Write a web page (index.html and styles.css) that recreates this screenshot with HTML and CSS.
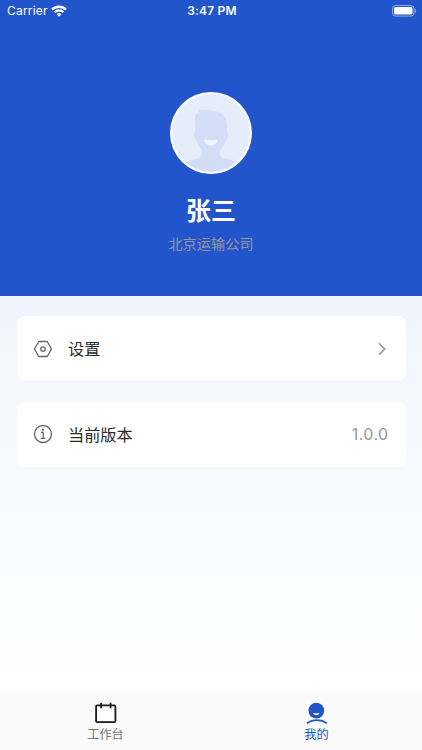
FILE: index.html
```html
<!DOCTYPE html>
<html lang="zh-CN">
<head>
  <meta charset="utf-8">
  <title>我的</title>
  <link rel="stylesheet" href="styles.css">
</head>
<body>

<header class="header">
  <div class="status">
    <div class="carrier">
      <span>Carrier</span>
      <svg width="16" height="12" viewBox="0 0 16 12" fill="none" stroke="#fff" stroke-width="2.3">
        <path d="M1 4.600a10 10 0 0 1 14 0"/>
        <path d="M3.600 7.300a6.300 6.300 0 0 1 8.800 0"/>
        <path d="M8 11.700L5.600 9.200a3.500 3.500 0 0 1 4.800 0z" fill="#fff" stroke="none"/>
      </svg>
    </div>
    <div class="time">3:47 PM</div>
    <svg class="battery" width="25" height="12" viewBox="0 0 25 12">
      <rect x=".5" y=".5" width="21.5" height="10.6" rx="3" fill="none" stroke="#fff" stroke-opacity=".5"/>
      <rect x="2" y="2" width="18.5" height="7.6" rx="1.6" fill="#fff"/>
      <path d="M23.2 4v4c1.4-.6 1.4-3.4 0-4z" fill="#fff" fill-opacity=".6"/>
    </svg>
  </div>
  <svg class="avatar" width="82" height="82" viewBox="0 0 82 82">
    <defs><clipPath id="face"><circle cx="41" cy="41" r="39"/></clipPath></defs>
    <circle cx="41" cy="41" r="41" fill="#fff"/>
    <circle cx="41" cy="41" r="39" fill="#e6edfa"/>
    <g clip-path="url(#face)">
      <path fill="#d3def6" d="M30 18C44 17 57 20 57 33v7c2 1 1 8-2 10-1 4-4 7-5 9-1 6 2 7 7 8 6 1 10 3 14 6v9H11v-9c4-3 9-5 14-6 5-1 8-3 7-9-2-3-4-6-5-9-3-2-4-8-2-10v-9c0-5 0-8 3-9 1-1 1-2 2-4z"/>
      <path fill="#eff4fd" d="M34.500 47.500c4 1 9 1 13 0 0 8-13 8-13 0z"/>
    </g>
  </svg>
  <div class="name">张三</div>
  <div class="company">北京运输公司</div>
</header>

<main class="list">
  <div class="card">
    <svg width="20" height="20" viewBox="0 0 20 20" fill="none" stroke="#666" stroke-width="1.3">
      <path d="M5.700 2.500h8.600L18.500 10l-4.200 7.500H5.700L1.500 10z" stroke-linejoin="round"/>
      <circle cx="10" cy="10" r="2.200"/>
    </svg>
    <span class="label">设置</span>
    <svg class="arrow" width="10" height="14" viewBox="0 0 10 14" fill="none" stroke="#969696" stroke-width="1.6">
      <path d="M2 1.300L7.700 7 2 12.700"/>
    </svg>
  </div>
  <div class="card">
    <svg width="20" height="20" viewBox="0 0 20 20" fill="none" stroke="#666" stroke-width="1.3">
      <circle cx="10" cy="10" r="8.500"/>
      <path d="M8 8.300h2.200v6M7.700 14.300h4.800"/>
      <circle cx="10" cy="5.700" r="1.100" fill="#666" stroke="none"/>
    </svg>
    <span class="label">当前版本</span>
    <span class="version">1.0.0</span>
  </div>
</main>

<nav class="tabs">
  <div class="tab">
    <svg width="24" height="24" viewBox="0 0 24 24" fill="none" stroke="#1a1a1a" stroke-width="1.8">
      <rect x="2.100" y="4.400" width="19.300" height="16.800" rx="1.200" fill="#fff"/>
      <path d="M7.100 1.700v5.500M16.600 1.700v5.500"/>
    </svg>
    <span>工作台</span>
  </div>
  <div class="tab active">
    <svg width="24" height="24" viewBox="0 0 24 24">
      <rect x="1" y="1" width="22" height="22" fill="#fff"/>
      <circle cx="11.300" cy="9.600" r="7.900" fill="#2255cc"/>
      <path d="M8.300 12q3 .8 6 0c0 2.800-6 2.800-6 0z" fill="#fff"/>
      <path d="M2 22.300C7.500 18 16 18 21.800 22.300" fill="none" stroke="#2255cc" stroke-width="1.800"/>
    </svg>
    <span>我的</span>
  </div>
</nav>

</body>
</html>
```
FILE: styles.css
```css
* {
  box-sizing: border-box;
}
body {
  margin: 0;
  height: 750px;
  display: flex;
  flex-direction: column;
  font-family: Inter, "Noto Sans CJK SC", sans-serif;
  background: linear-gradient(#f1f4fd 295px, #fff 690px);
}
svg {
  display: block;
  flex: none;
}
.header {
  height: 295.5px;
  background: #2255cc;
  color: #fff;
  display: flex;
  flex-direction: column;
  align-items: center;
}
.status {
  width: 100%;
  height: 21px;
  padding: 0 5px 0 7px;
  display: grid;
  grid-template-columns: 1fr auto 1fr;
  align-items: center;
  font-size: 12px;
  letter-spacing: 0.2px;
}
.carrier {
  display: flex;
  align-items: center;
  gap: 3px;
}
.time {
  font-weight: 600;
}
.battery {
  justify-self: end;
}
.avatar {
  margin-top: 71px;
}
.name {
  margin-top: 19px;
  font-size: 25px;
  line-height: 36px;
  font-weight: 700;
}
.company {
  margin-top: 5px;
  font-size: 14.2px;
  line-height: 20px;
  color: #969799;
}
.list {
  flex: 1;
  padding: 20.5px 16.5px;
  display: flex;
  flex-direction: column;
  gap: 20.5px;
}
.card {
  height: 65px;
  padding: 0 17px 0 16.5px;
  display: flex;
  align-items: center;
  background: #fff;
  border-radius: 8px;
}
.label {
  flex: 1;
  margin: -1px 0 0 15px;
  font-size: 16.2px;
  color: #2a2a2a;
}
.arrow {
  margin-right: 2px;
}
.version {
  font-size: 16px;
  letter-spacing: 0.4px;
  color: #969799;
}
.tabs {
  height: 59px;
  display: flex;
  background: #fafafa;
}
.tab {
  flex: 1;
  padding-top: 10px;
  display: flex;
  flex-direction: column;
  align-items: center;
  font-size: 12.2px;
  line-height: 19px;
  color: #777;
}
.active {
  color: #2255cc;
}
```
